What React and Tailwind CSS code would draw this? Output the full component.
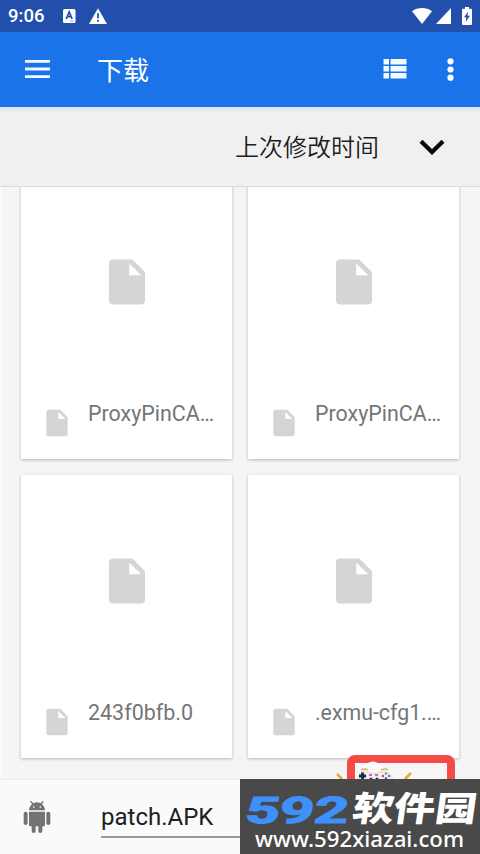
import React from "react";

const files = [
  { name: "ProxyPinCA…", width: 126 },
  { name: "ProxyPinCA…", width: 126 },
  { name: "243f0bfb.0", width: 105 },
  { name: ".exmu-cfg1.…", width: 126 },
];

function FileIcon({ className }) {
  return (
    <svg viewBox="0 0 24 24" className={className} fill="#d5d5d5">
      <path d="M5.7 2C4.7 2 4 2.7 4 3.7v16.6c0 1 .7 1.7 1.7 1.7h12.6c1 0 1.7-.7 1.7-1.7V8.2c0-.5-.2-.8-.5-1.100l-4.600-4.600c-.3-.3-.7-.5-1.100-.5H5.700zM13 9V3.800L18.300 9H13z" />
    </svg>
  );
}

function StatusBar() {
  return (
    <div className="flex h-8 items-center bg-[#234fac] pl-2 text-white">
      <span className="w-[55px] text-[18.500px] leading-8 font-medium">9:06</span>
      <svg className="h-[14px] w-[13px]" viewBox="0 0 13 14">
        <rect width="12.500" height="14" rx="1.500" fill="white" />
        <path d="M3.200 10 6.200 3l3 7M4.400 7.700h3.700" fill="none" stroke="#234fac" strokeWidth="1.700" />
        <path d="M7 12h4" stroke="#9bb0dc" strokeWidth="1" />
      </svg>
      <svg className="ml-[13px] h-4 w-[18px]" viewBox="0 0 18 16">
        <path d="M9 .3 18 16H0z" fill="white" />
        <path d="M9 5.200v5M9 11.700v2" stroke="#234fac" strokeWidth="1.800" />
      </svg>
      <svg className="ml-auto h-4 w-5" viewBox="0 0 20 16">
        <path d="M0 3.200C5.600-1 14.400-1 20 3.200L10 16z" fill="white" />
      </svg>
      <svg className="ml-1 h-4 w-[15px]" viewBox="0 0 15 16">
        <path d="M15 0v16H0z" fill="white" />
      </svg>
      <svg className="mr-2 ml-[11px] h-[18px] w-[10px]" viewBox="0 0 10 18">
        <path d="M3 0h4v1.800h2q1 0 1 1V17q0 1-1 1H1q-1 0-1-1V2.800q0-1 1-1h2z" fill="white" />
        <path d="M6.200 4.500 2 10.300h2.300L3.600 15 8 8.700H5.500z" fill="#234fac" />
      </svg>
    </div>
  );
}

function AppBar() {
  return (
    <header className="flex h-[74.500px] items-center bg-[#1a73e8] pl-[25px] text-white">
      <svg className="h-[18px] w-[25px]" viewBox="0 0 25 18" fill="#f2fbff">
        <path d="M0 0h25v2.800H0zM0 7.600h25v2.800H0zM0 15.200h25V18H0z" />
      </svg>
      <h1 className="ml-[47px] font-['Noto_Sans_CJK_SC',sans-serif] text-[26px] leading-9 font-normal">下载</h1>
      <svg className="ml-auto h-5 w-6" viewBox="0 0 24 20" fill="#f2fbff">
        <path d="M.5 0H6v5.500H.5zM7.500 0h16v5.500h-16zM.5 7H6v5.500H.5zM7.500 7h16v5.500h-16zM.5 14H6v5.500H.5zM7.500 14h16v5.500h-16z" />
      </svg>
      <svg className="mr-[26px] ml-10 h-[23px] w-[7px]" viewBox="0 0 7 23" fill="white">
        <circle cx="3.500" cy="3.300" r="3.100" />
        <circle cx="3.500" cy="11.500" r="3.100" />
        <circle cx="3.500" cy="19.700" r="3.100" />
      </svg>
    </header>
  );
}

function SortBar() {
  return (
    <div className="flex h-[80px] items-center justify-end border-b border-[#d9d9d9] bg-[#f0f0f0] bg-linear-to-b from-[#dfe1e6] from-0% to-[#f0f0f0] to-8% pr-[35px]">
      <span className="font-['Noto_Sans_CJK_SC',sans-serif] text-[24px] leading-9 font-[350] text-[#1c1c1c]">上次修改时间</span>
      <svg className="mt-0.5 ml-[40px] h-4 w-[26px]" viewBox="0 0 26 16">
        <path d="M2 2.200 13 13 24 2.200" fill="none" stroke="#0a0a0a" strokeWidth="4.200" />
      </svg>
    </div>
  );
}

function FileCard({ name, width }) {
  return (
    <div className="flex h-[283px] flex-col bg-white shadow-[0_1px_3px_rgba(0,0,0,0.250)]">
      <div className="flex h-[211px] items-center justify-center">
        <FileIcon className="size-[54px]" />
      </div>
      <div className="flex flex-1 pl-[20px]">
        <FileIcon className="mt-5 size-8 shrink-0" />
        <svg className="ml-[15px] h-10 w-[130px] overflow-visible" fill="#757575">
          <text x="0" y="34" fontSize="22" textLength={width} lengthAdjust="spacingAndGlyphs">{name}</text>
        </svg>
      </div>
    </div>
  );
}

function SaveBar() {
  return (
    <footer className="flex h-[75px] border-t border-[#eeeeee] bg-[#fafafa] pl-[21px]">
      <svg viewBox="0 0 24 24" className="mt-[21px] size-8 shrink-0" fill="#737373">
        <path d="M6 18c0 .55.45 1 1 1h1v3.500c0 .83.67 1.500 1.500 1.500s1.500-.67 1.500-1.500V19h2v3.500c0 .83.67 1.500 1.500 1.500s1.500-.67 1.500-1.500V19h1c.55 0 1-.45 1-1V8H6v10zM3.500 8C2.670 8 2 8.670 2 9.500v7c0 .83.67 1.500 1.500 1.500S5 17.330 5 16.500v-7C5 8.670 4.330 8 3.500 8zm17 0c-.83 0-1.500.67-1.500 1.500v7c0 .83.67 1.500 1.500 1.500s1.500-.67 1.500-1.500v-7c0-.83-.67-1.500-1.500-1.500zm-4.970-5.840l1.300-1.300c.2-.2.2-.51 0-.71-.2-.2-.51-.2-.71 0l-1.480 1.480C13.850 1.230 12.950 1 12 1c-.96 0-1.860.23-2.660.63L7.850.15c-.2-.2-.51-.2-.71 0-.2.2-.2.51 0 .71l1.310 1.310C6.970 3.260 6 5.010 6 7h12c0-1.990-.97-3.750-2.470-4.840zM10 5H9V4h1v1zm5 0h-1V4h1v1z" />
      </svg>
      <div className="ml-12 h-[58px] w-[300px] border-b-2 border-[#999999] pt-[21px] text-[24px] leading-8 text-[#202020]">
        patch.APK
      </div>
    </footer>
  );
}

// highlight frame with the small gamepad sticker peeking out
function Sticker() {
  return (
    <>
      <div className="absolute top-[755px] left-[347px] h-12 w-[108px] rounded-[8px] border-8 border-[#f34b46] bg-[#f8f6f6]" />
      <svg className="absolute top-[758px] left-[332px] h-6 w-[84px]" viewBox="0 0 84 24">
        <path d="m5 16 5 5M79 15l-6 6" stroke="#e5ae32" strokeWidth="2.500" />
        <path d="M34 6q7-5 14 0l5 5H29z" fill="#fafcff" />
        <path d="M26 24c0-9 4-12 10-10 5 2 8 2 13 0 7-2 11 2 12 10z" fill="#eceff5" stroke="#cbd0dc" strokeWidth=".7" />
        <path d="M29 12q4-2 7 0M49 12q4-2 7 0" fill="none" stroke="#dfb15a" strokeWidth="1.500" />
        <path d="M27 18h7M30.500 14.500v7" stroke="#1c2c43" strokeWidth="2.800" />
        <path d="M37 17h3M43 17h3" stroke="#d5445c" strokeWidth="1.400" />
        <circle cx="39" cy="21" r="1.500" fill="#28334c" />
        <circle cx="45" cy="21" r="1.500" fill="#28334c" />
        <circle cx="54" cy="15.500" r="1.200" fill="#35aac0" />
        <circle cx="51" cy="18" r="1.200" fill="#db3d5b" />
        <circle cx="57" cy="18" r="1.200" fill="#d94c62" />
        <circle cx="54" cy="20.500" r="1.200" fill="#4d507b" />
      </svg>
    </>
  );
}

function Watermark() {
  return (
    <svg className="absolute top-[779px] left-[240px] h-[75px] w-[240px] bg-[#494949]" viewBox="0 0 240 75">
      <g transform="translate(4 43.500) skewX(-8)">
        <text x="0" y="0" className="font-[Roboto,sans-serif] font-bold" fontSize="36.500" textLength="103" lengthAdjust="spacingAndGlyphs" fill="#3e91fa" stroke="#3e91fa" strokeWidth="1.200" strokeLinejoin="miter">592</text>
      </g>
      <g transform="translate(111 42) skewX(-8)">
        <text x="0" y="0" className="font-['Noto_Sans_CJK_SC',sans-serif] font-black" fontSize="34.500" textLength="124" lengthAdjust="spacingAndGlyphs" fill="white">软件园</text>
      </g>
      <text x="15" y="67.500" className="font-['Noto_Sans',sans-serif] font-medium" fontSize="22" textLength="209" lengthAdjust="spacingAndGlyphs" fill="white">www.592xiazai.com</text>
    </svg>
  );
}

export default function App() {
  return (
    <div className="relative flex h-[854px] w-[480px] flex-col overflow-hidden bg-[#f5f5f5] font-[Roboto,'Noto_Sans_CJK_SC',sans-serif]">
      <StatusBar />
      <AppBar />
      <SortBar />
      <main className="min-h-0 flex-1 overflow-hidden border-l-2 border-[#fafafa]">
        <div className="-mt-[10.500px] grid grid-cols-[211px_211px] gap-4 pl-[19px]">
          {files.map((file, idx) => (
            <FileCard key={idx} name={file.name} width={file.width} />
          ))}
        </div>
      </main>
      <SaveBar />
      <Sticker />
      <Watermark />
    </div>
  );
}
